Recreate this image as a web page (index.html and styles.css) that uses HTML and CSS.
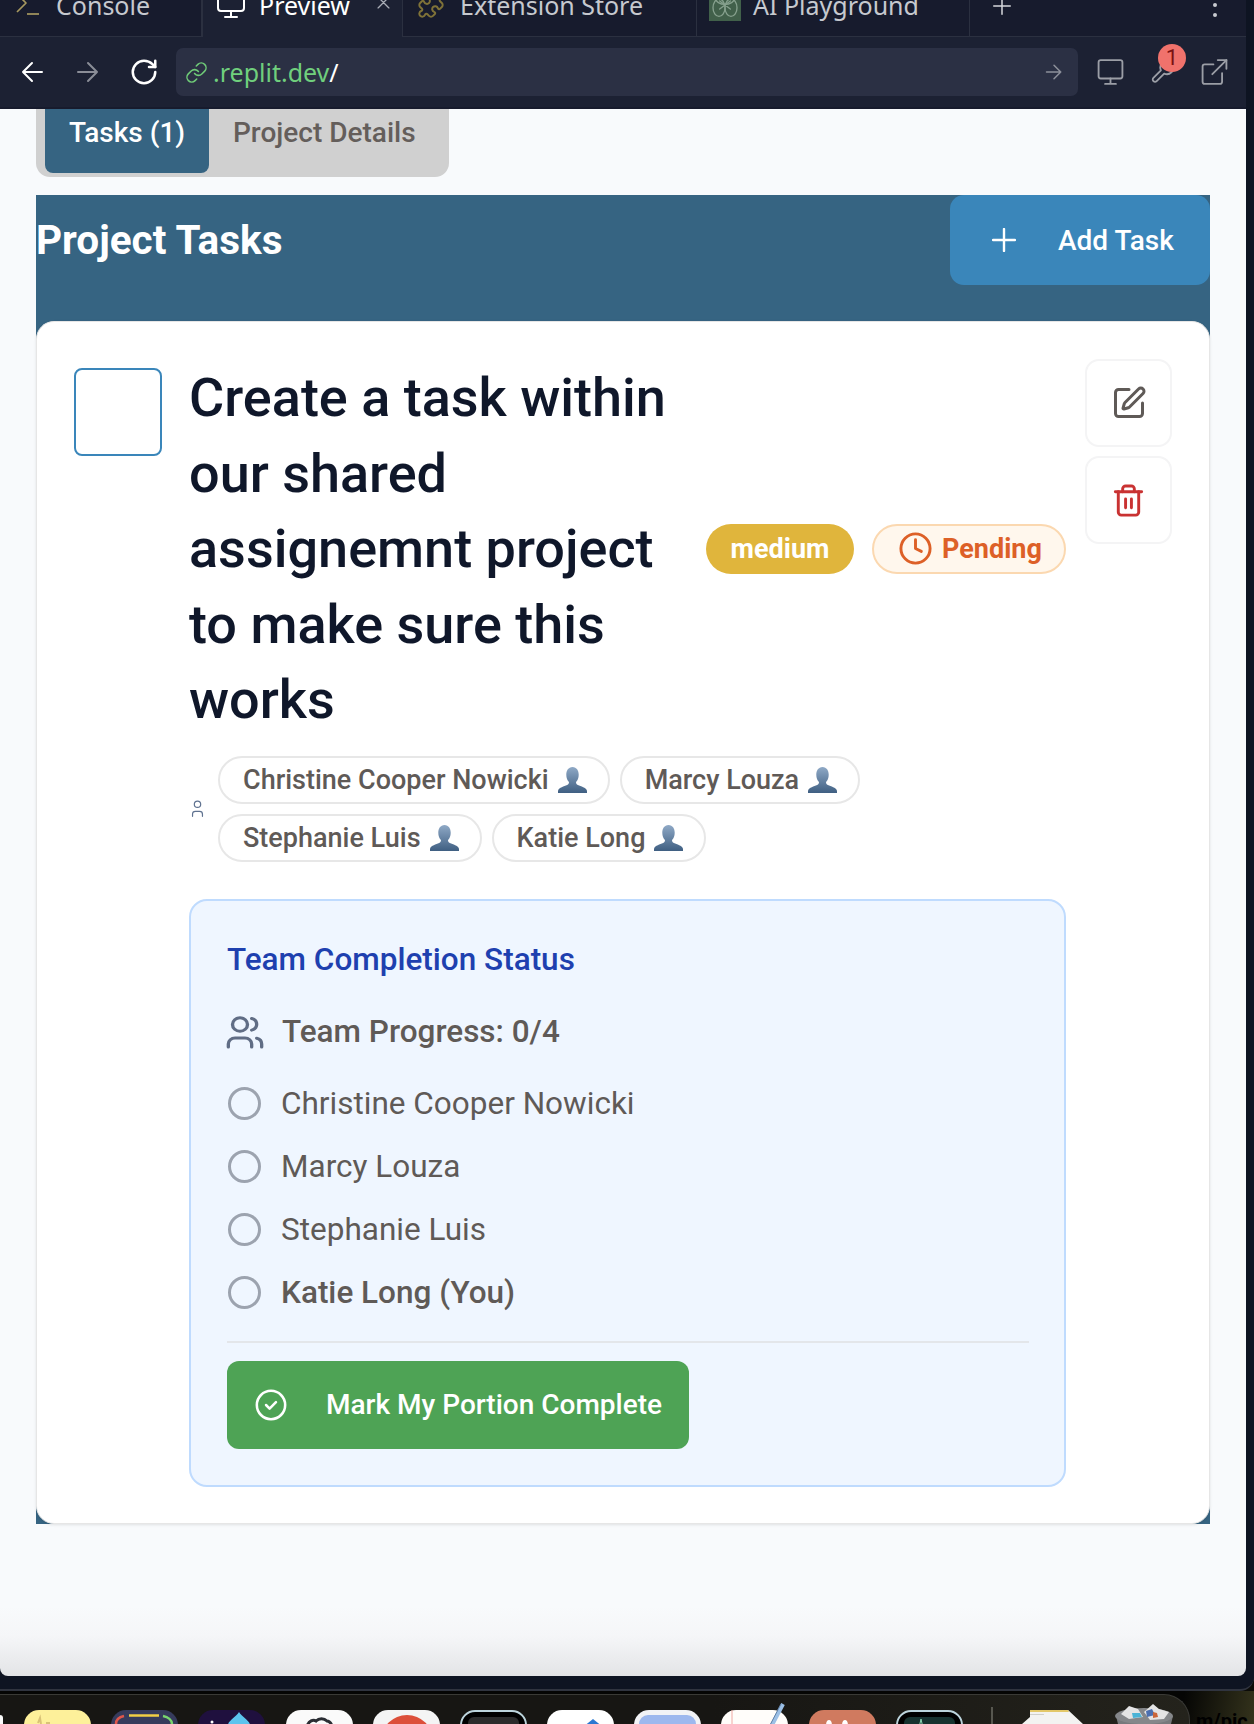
FILE: index.html
```html
<!DOCTYPE html>
<html lang="en">
<head>
  <meta charset="UTF-8" />
  <title>Project Tasks</title>
  <link rel="stylesheet" href="styles.css">
</head>
<body>
  <svg class="defs" width="0" height="0">
    <defs>
      <linearGradient id="bust" x1="0" y1="0" x2="0" y2="1">
        <stop offset="0" stop-color="#8fa9c6" />
        <stop offset="1" stop-color="#3f5f82" />
      </linearGradient>
      <symbol id="bust-icon" viewBox="0 0 28 25">
        <path fill="url(#bust)" d="M14 0c4 0 6 3.600 6 7.500 0 3-1.100 5.500-2.600 7 0 1.300.4 2.200 1.800 2.900 3 1.400 7.800 2.400 8.600 5.100.3 1 .2 1.700.2 2.500H0c0-.8-.1-1.500.2-2.500.8-2.700 5.600-3.700 8.600-5.100 1.400-.7 1.800-1.600 1.800-2.900-1.500-1.500-2.600-4-2.600-7C8 3.600 10 0 14 0z" />
      </symbol>
    </defs>
  </svg>

  <div class="window">
    <div class="tabstrip">
      <div class="tab tab-console">
        <svg class="ic ic-prompt" viewBox="0 0 24 24"><path d="M1 2l9 9-9 9" /><path d="M11 22h12" /></svg>
        <span>Console</span>
      </div>
      <div class="tab tab-active">
        <svg class="ic ic-tab" viewBox="0 0 28 28"><rect x="1" y="1" width="26" height="20" rx="3" /><path d="M14 21v6M8 27h12" /></svg>
        <span>Preview</span>
        <svg class="ic ic-close" viewBox="0 0 12 12"><path d="M1 1l10 10M11 1L1 11" /></svg>
      </div>
      <div class="tab tab-ext">
        <svg class="ic ic-puzzle" viewBox="0 0 24 24"><path d="M19.439 7.850c-.049.322.059.648.289.878l1.568 1.568c.47.47.706 1.087.706 1.704s-.235 1.233-.706 1.704l-1.611 1.611a.98.98 0 0 1-.837.276c-.47-.07-.802-.48-.968-.925a2.501 2.501 0 1 0-3.214 3.214c.446.166.855.497.925.968a.979.979 0 0 1-.276.837l-1.610 1.610a2.404 2.404 0 0 1-1.705.707 2.402 2.402 0 0 1-1.704-.706l-1.568-1.568a1.026 1.026 0 0 0-.877-.29c-.493.074-.84.504-1.020.968a2.500 2.500 0 1 1-3.237-3.237c.464-.18.894-.527.967-1.020a1.026 1.026 0 0 0-.289-.877l-1.568-1.568A2.402 2.402 0 0 1 1.998 12c0-.617.236-1.234.706-1.704L4.230 8.770c.24-.24.581-.353.917-.303.515.077.877.528 1.073 1.010a2.500 2.500 0 1 0 3.259-3.259c-.482-.196-.933-.558-1.010-1.073-.05-.336.062-.676.303-.917l1.525-1.525A2.402 2.402 0 0 1 12 1.998c.617 0 1.234.236 1.704.706l1.568 1.568c.23.23.556.338.877.29.493-.074.84-.504 1.020-.968a2.500 2.500 0 1 1 3.237 3.237c-.464.18-.894.527-.967 1.020Z" /></svg>
        <span>Extension Store</span>
      </div>
      <div class="tab tab-ai">
        <span class="ai-logo">
          <svg class="ic" viewBox="0 0 24 24"><ellipse cx="12" cy="7" rx="7" ry="4.500" /><ellipse cx="7.500" cy="14" rx="4.500" ry="6.500" /><ellipse cx="16.500" cy="14" rx="4.500" ry="6.500" /><path d="M8 9l8 6M16 9l-8 6" /></svg>
        </span>
        <span>AI Playground</span>
      </div>
      <div class="tab-new">
        <svg class="ic ic-plus" viewBox="0 0 24 24"><path d="M12 1v22M1 12h22" /></svg>
      </div>
      <div class="kebab"><i></i><i></i></div>
    </div>

    <div class="urlbar">
      <svg class="ic ic-nav" viewBox="0 0 24 24"><path d="M12 3l-9 9 9 9M3 12h19" /></svg>
      <svg class="ic ic-nav ic-dim" viewBox="0 0 24 24"><path d="M12 3l9 9-9 9M21 12H2" /></svg>
      <svg class="ic ic-nav ic-reload" viewBox="0 0 24 24"><path d="M21 12a9 9 0 1 1-9-9c2.520 0 4.930 1 6.740 2.740L21 8" /><path d="M21 3v5h-5" /></svg>
      <div class="address">
        <svg class="ic ic-link" viewBox="0 0 24 24"><path d="M10 13a5 5 0 0 0 7.540.54l3-3a5 5 0 0 0-7.070-7.070l-1.720 1.710" /><path d="M14 11a5 5 0 0 0-7.540-.54l-3 3a5 5 0 0 0 7.070 7.070l1.710-1.710" /></svg>
        <span class="host">.replit.dev</span><span class="path">/</span>
        <svg class="ic ic-go" viewBox="0 0 24 24"><path d="M12 3l9 9-9 9M21 12H2" /></svg>
      </div>
      <div class="bar-tools">
        <svg class="ic ic-tool" viewBox="0 0 24 24"><rect x="1" y="1" width="22" height="17" rx="2" /><path d="M12 18v5M7 23h10" /></svg>
        <span class="wrench">
          <svg class="ic ic-tool" viewBox="0 0 24 24"><path d="M14.700 6.300a1 1 0 0 0 0 1.400l1.600 1.600a1 1 0 0 0 1.400 0l3.770-3.770a6 6 0 0 1-7.940 7.940l-6.910 6.910a2.120 2.120 0 0 1-3-3l6.910-6.910a6 6 0 0 1 7.940-7.940l-3.760 3.760z" /></svg>
          <span class="wrench-badge">1</span>
        </span>
        <svg class="ic ic-tool" viewBox="0 0 24 24"><path d="M19 13v8a2 2 0 0 1-2 2H3a2 2 0 0 1-2-2V7a2 2 0 0 1 2-2h8" /><path d="M15 1h8v8" /><path d="M10 14 23 1" /></svg>
      </div>
    </div>

    <main class="page">
      <div class="tablist">
        <div class="tablist-item tablist-active">Tasks (1)</div>
        <div class="tablist-item">Project Details</div>
      </div>

      <section class="board">
        <header class="board-head">
          <h2>Project Tasks</h2>
          <button class="add-btn">
            <svg class="ic ic-add" viewBox="0 0 24 24"><path d="M12 1v22M1 12h22" /></svg>
            Add Task
          </button>
        </header>

        <article class="card">
          <div class="checkbox"></div>

          <div class="task">
            <div class="task-top">
              <h3>Create a task within our shared assignemnt project to make sure this works</h3>
              <span class="badge badge-medium">medium</span>
              <span class="badge badge-pending">
                <svg class="ic ic-clock" viewBox="0 0 24 24"><circle cx="12" cy="12" r="10" /><path d="M12 6v6l4 2" /></svg>
                Pending
              </span>
            </div>

            <div class="assignees">
              <svg class="ic ic-user" viewBox="0 0 24 24"><path d="M19 23v-3a4 4 0 0 0-4-4H9a4 4 0 0 0-4 4v3" /><circle cx="12" cy="6" r="4.500" /></svg>
              <div class="chips">
                <span class="chip">Christine Cooper Nowicki <svg class="bust"><use href="#bust-icon" /></svg></span>
                <span class="chip">Marcy Louza <svg class="bust"><use href="#bust-icon" /></svg></span>
                <span class="chip">Stephanie Luis <svg class="bust"><use href="#bust-icon" /></svg></span>
                <span class="chip">Katie Long <svg class="bust"><use href="#bust-icon" /></svg></span>
              </div>
            </div>

            <div class="team">
              <h4>Team Completion Status</h4>
              <div class="progress">
                <svg class="ic ic-users" viewBox="0 0 24 24" preserveAspectRatio="none"><path d="M16 22v-2a4 4 0 0 0-4-4H6a4 4 0 0 0-4 4v2" /><circle cx="9" cy="7" r="4.500" /><path d="M22 22v-2a4 4 0 0 0-3-3.870" /><path d="M16 3a4 4 0 0 1 0 7.750" /></svg>
                Team Progress: 0/4
              </div>
              <ul class="members">
                <li><span class="radio"></span>Christine Cooper Nowicki</li>
                <li><span class="radio"></span>Marcy Louza</li>
                <li><span class="radio"></span>Stephanie Luis</li>
                <li class="me"><span class="radio"></span>Katie Long (You)</li>
              </ul>
              <hr />
              <button class="complete-btn">
                <svg class="ic ic-check" viewBox="0 0 24 24"><circle cx="12" cy="12" r="10" /><path d="m8.500 12 2.500 2.500 4.500-4.500" /></svg>
                Mark My Portion Complete
              </button>
            </div>
          </div>

          <div class="actions">
            <button class="act-btn">
              <svg class="ic ic-edit" viewBox="0 0 24 24"><path d="M12 3H5a2 2 0 0 0-2 2v14a2 2 0 0 0 2 2h14a2 2 0 0 0 2-2v-7" /><path d="M18.375 2.625a1 1 0 0 1 3 3l-9.013 9.014a2 2 0 0 1-.853.505l-2.873.84a.5.5 0 0 1-.62-.62l.84-2.873a2 2 0 0 1 .506-.852z" /></svg>
            </button>
            <button class="act-btn">
              <svg class="ic ic-trash" viewBox="0 0 24 24"><path d="M3 6h18" /><path d="M19 6v14c0 1-1 2-2 2H7c-1 0-2-1-2-2V6" /><path d="M8 6V4c0-1 1-2 2-2h4c1 0 2 1 2 2v2" /><path d="M10 11v6M14 11v6" /></svg>
            </button>
          </div>
        </article>
      </section>
    </main>
  </div>

  <footer class="desktop">
    <div class="dock">
      <div class="app-edge"></div>
      <div class="app app-notes">
        <svg viewBox="0 0 67 20"><path fill="none" stroke="#d9c277" stroke-width="2" d="M14 13l2-5 1 6M22 13h4" /></svg>
      </div>
      <div class="app app-stats">
        <svg viewBox="0 0 67 20">
          <path fill="none" stroke="#f2cf45" stroke-width="2.500" d="M18 5.500h30" />
          <path fill="none" stroke="#e0574b" stroke-width="2.500" d="M5 14c0-4 3-7 8-8" />
          <path fill="none" stroke="#79d66e" stroke-width="2.500" d="M52 6c5 1 9 4 9 8" />
        </svg>
      </div>
      <div class="app app-drop">
        <svg viewBox="0 0 67 20"><path fill="#5cc4ee" d="M41 2c3 5 11 9 11 13H30c0-4 8-8 11-13z" /><circle cx="14" cy="12" r="1.500" fill="#fff" /></svg>
      </div>
      <div class="app app-cloud">
        <svg viewBox="0 0 67 20"><path fill="none" stroke="#2a2d33" stroke-width="3" d="M21 16c2-5 6-7 9-5 3-3 8-3 11 0 3 0 4 2 5 5" /></svg>
      </div>
      <div class="app app-red"><i></i></div>
      <div class="app app-term"><i></i></div>
      <div class="app app-blue">
        <svg viewBox="0 0 67 20"><path fill="#2a78d2" d="M46 9l10 8H36z" /></svg>
      </div>
      <div class="app app-peri"><i></i></div>
      <div class="app app-pad">
        <svg class="pencil" viewBox="0 0 68 24">
          <path fill="none" stroke="#f0a9a4" stroke-width="1" d="M11 7v17" />
          <path fill="none" stroke="#9cc0e6" stroke-width="4" d="M62 1L50 24" />
          <path fill="none" stroke="#5e7fa5" stroke-width="1" d="M60 1L48 24" />
        </svg>
      </div>
      <div class="app app-orange">
        <svg viewBox="0 0 67 20"><path fill="#fff" d="M20 10c2 0 3 2 3 6h-6c0-4 1-6 3-6zM36 10c2 0 3 2 3 6h-6c0-4 1-6 3-6z" /></svg>
      </div>
      <div class="app app-monitor">
        <i><svg viewBox="0 0 50 12"><path fill="none" stroke="#8fd9b6" stroke-width="1" d="M0 11h15l2-9 2 9h31" /></svg></i>
      </div>
      <div class="dock-sep"></div>
      <svg class="app-docs" viewBox="0 0 61 14">
        <path fill="#f3f3f1" d="M8 0h38l15 14H0l8-7z" />
        <path fill="#e3c869" d="M8 0h38l1 2H8z" />
        <path fill="#cfcfca" d="M8 4h14v1H8z" />
      </svg>
      <svg class="app-bin" viewBox="0 0 61 21">
        <path fill="#77797c" d="M2 13h57l-2 8H4z" />
        <ellipse cx="30" cy="13" rx="29" ry="8" fill="#85878a" />
        <path fill="#e4e4e4" d="M7 11l8-8 9 3 5 8-14 2zM30 9l9-8 6 5 10 3-5 7-14 1z" />
        <path fill="#4bb3d6" d="M18 10h8l2 4-9 1z" />
        <path fill="#4b6fb0" d="M32 8l6-2 3 6-8 2z" />
        <path fill="#c9653a" d="M39 9l4 1 1 4-5 1z" />
      </svg>
    </div>
    <div class="wallpaper-text">m/pic</div>
  </footer>
</body>
</html>
```

FILE: styles.css
```css
* { box-sizing: border-box; }
html, body { margin: 0; padding: 0; }
body {
  width: 1254px;
  height: 1724px;
  overflow: hidden;
  display: flex;
  flex-direction: column;
  background: #0b0b08;
  font-family: Roboto, "Liberation Sans", sans-serif;
}
.defs { display: block; height: 0; }
h2, h3, h4, ul { margin: 0; padding: 0; }
button { font-family: inherit; border: 0; cursor: pointer; }

.ic {
  fill: none;
  stroke: currentColor;
  stroke-width: 2;
  stroke-linecap: round;
  stroke-linejoin: round;
  flex-shrink: 0;
}

/* browser chrome */
.window {
  height: 1691px;
  flex-shrink: 0;
  display: flex;
  flex-direction: column;
  padding: 0 8px 13px 0;
  background: #0e1422;
  border-bottom: 2px solid #30343f;
  border-bottom-right-radius: 14px;
  overflow: hidden;
}
.tabstrip {
  height: 37px;
  flex-shrink: 0;
  display: flex;
  background: #171b2d;
  border-bottom: 1px solid #2b3040;
  color: #c6c9cf;
  font-family: "Noto Sans", sans-serif;
  font-size: 25px;
}
.tab {
  height: 36px;
  display: flex;
  align-items: flex-end;
  padding-bottom: 16px;
  border-right: 1px solid #2b3040;
  line-height: 30px;
  white-space: nowrap;
}
.tab-console { width: 202px; padding-left: 16px; gap: 16px; }
.tab-active {
  width: 201px;
  height: 37px;
  padding-left: 14px;
  padding-bottom: 17px;
  gap: 14px;
  background: #1c2133;
  color: #fff;
  border-left: 1px solid #2b3040;
  border-right: 1px solid #2b3040;
}
.tab-ext { width: 294px; padding-left: 14px; gap: 15px; }
.tab-ai { width: 273px; padding-left: 12px; gap: 12px; }
.tab-new { width: 60px; padding: 0 0 0 23px; color: #d6d8dc; }
.ic-prompt { width: 24px; height: 24px; margin-bottom: 4px; color: #a6985f; stroke-width: 1.700; stroke-linecap: butt; }
.ic-tab { width: 28px; height: 28px; margin-bottom: 2px; }
.ic-close { width: 13px; height: 13px; margin: 0 0 11px 13px; color: #a9adb6; stroke-width: 1.200; }
.ic-puzzle { width: 28px; height: 28px; margin-bottom: 1px; color: #7f7238; stroke-width: 1.700; }
.ai-logo {
  width: 32px;
  height: 32px;
  margin-bottom: -1px;
  background: #41604a;
  color: #86a08d;
  display: flex;
}
.ai-logo svg { width: 32px; height: 32px; stroke-width: 1; }
.ic-plus { width: 18px; height: 18px; margin-top: -3px; display: block; }
.kebab {
  margin-left: auto;
  margin-right: 29px;
  padding-top: 3px;
  display: flex;
  flex-direction: column;
  gap: 6px;
}
.kebab i { width: 4px; height: 4px; border-radius: 50%; background: #c8cad0; }

.urlbar {
  height: 72px;
  flex-shrink: 0;
  display: flex;
  align-items: center;
  padding-bottom: 2px;
  background: linear-gradient(#1c2133 70px, #171b2d 70px);
  color: #fff;
}
.ic-nav { width: 24px; height: 24px; margin-left: 20px; }
.ic-dim { margin-left: 32px; color: #8a8d97; }
.ic-reload { width: 30px; height: 30px; margin-left: 29px; }
.address {
  width: 902px;
  height: 48px;
  margin-left: 17px;
  padding: 0 15px 0 9px;
  display: flex;
  align-items: center;
  border-radius: 7px;
  background: #2b3044;
  font-family: "Noto Sans", sans-serif;
  font-size: 25px;
}
.ic-link { width: 23px; height: 23px; margin-right: 5px; color: #6fcb78; stroke-width: 1.600; }
.host { color: #70cf7d; }
.path { color: #fff; }
.ic-go { width: 18px; height: 18px; margin-left: auto; color: #8d909b; }
.bar-tools {
  margin-left: 18px;
  display: flex;
  align-items: center;
  gap: 23px;
  color: #9b9ea6;
}
.ic-tool { width: 29px; height: 26px; stroke-width: 1.700; }
.wrench { position: relative; display: flex; }
.wrench-badge {
  position: absolute;
  top: -15px;
  right: -9px;
  width: 28px;
  height: 28px;
  border-radius: 50%;
  background: #f0726c;
  color: #7c1212;
  font-size: 22px;
  line-height: 28px;
  text-align: center;
}

/* page */
.page {
  flex: 1;
  padding: 0 36px;
  background: linear-gradient(#f8fafc calc(100% - 70px), #f5f6f8 calc(100% - 40px), #e3e4e6 100%);
  border-radius: 0 0 8px 8px;
  overflow: hidden;
}
.tablist {
  width: 413px;
  height: 68px;
  display: flex;
  padding: 0 9px 4px;
  background: #d0d0d0;
  border-radius: 0 0 14px 14px;
  font-size: 28px;
  font-weight: 500;
  color: #645e5b;
  white-space: nowrap;
}
.tablist-item { padding: 6px 25px 0 24px; line-height: 36px; }
.tablist-active {
  width: 164px;
  background: #366482;
  color: #fff;
  border-radius: 0 0 8px 8px;
}

.board {
  width: 1174px;
  height: 1329px;
  margin-top: 18px;
  background: #366482;
}
.board-head {
  height: 126px;
  display: flex;
  justify-content: space-between;
  align-items: flex-start;
}
.board-head h2 {
  color: #fff;
  font-size: 40.500px;
  font-weight: 700;
  line-height: 90px;
}
.add-btn {
  width: 260px;
  height: 90px;
  display: flex;
  align-items: center;
  padding-left: 42px;
  gap: 42px;
  border-radius: 14px;
  background: #3a86ba;
  color: #fff;
  font-size: 28px;
  font-weight: 500;
}
.ic-add { width: 24px; height: 24px; stroke-width: 2.400; }

.card {
  height: 1203px;
  display: flex;
  align-items: flex-start;
  padding: 37px 37px 0 37px;
  background: #fff;
  border: 1px solid #e6e6e6;
  border-radius: 18px;
  box-shadow: 0 1px 3px rgba(0, 0, 0, .1);
}
.checkbox {
  width: 88px;
  height: 88px;
  margin-top: 9px;
  margin-right: 27px;
  border: 2px solid #3a86ba;
  border-radius: 8px;
  flex-shrink: 0;
}
.task { width: 877px; margin-top: 1px; flex-shrink: 0; }
.task-top { display: flex; align-items: center; gap: 18px; }
.task-top h3 {
  flex: 1;
  margin-right: 6px;
  color: #0f172a;
  font-size: 54px;
  font-weight: 500;
  line-height: 75.500px;
}
.badge {
  height: 50px;
  display: flex;
  align-items: center;
  border-radius: 25px;
  font-size: 27px;
  font-weight: 700;
  white-space: nowrap;
}
.badge-medium { width: 148px; justify-content: center; background: #e0b53c; color: #fff; }
.badge-pending {
  width: 194px;
  padding-left: 24px;
  gap: 9px;
  background: #fff7ed;
  border: 2px solid #fbd8b0;
  color: #dd6027;
}
.ic-clock { width: 35px; height: 35px; }

.assignees {
  margin-top: 18px;
  display: flex;
  align-items: center;
  color: #5f7290;
}
.ic-user { width: 17px; height: 17px; margin-right: 12px; stroke-width: 1.700; }
.chips { width: 660px; display: flex; flex-wrap: wrap; gap: 10px; }
.chip {
  height: 48px;
  display: flex;
  align-items: center;
  gap: 9px;
  padding: 0 21px 0 23px;
  border: 2px solid #e7e7e7;
  border-radius: 24px;
  color: #5f5a57;
  font-size: 27px;
  font-weight: 500;
  white-space: nowrap;
}
.bust { width: 29px; height: 26px; }

.team {
  height: 588px;
  margin-top: 37px;
  padding: 37px 35px 0 36px;
  background: #eff6ff;
  border: 2px solid #bfdbfe;
  border-radius: 18px;
}
.team h4 {
  color: #1e40af;
  font-size: 31.500px;
  font-weight: 500;
  line-height: 44px;
}
.progress {
  height: 40px;
  margin-top: 30px;
  display: flex;
  align-items: center;
  gap: 17px;
  color: #5f5a57;
  font-size: 31.500px;
  font-weight: 500;
}
.ic-users { width: 40px; height: 36px; margin: 0 0 0 -2px; color: #606d85; }
.members { margin-top: 34px; list-style: none; display: flex; flex-direction: column; gap: 27px; }
.members li {
  height: 36px;
  display: flex;
  align-items: center;
  gap: 21px;
  color: #5f5a57;
  font-size: 31.500px;
}
.members .me { font-weight: 500; }
.radio {
  width: 33px;
  height: 33px;
  margin-left: 1px;
  border: 3px solid #9ca3af;
  border-radius: 50%;
  margin-right: -1px;
}
.team hr {
  margin: 30px 0 18px;
  height: 2px;
  border: 0;
  background: #e3e6ea;
}
.complete-btn {
  width: 462px;
  height: 88px;
  display: flex;
  align-items: center;
  padding-left: 27px;
  gap: 38px;
  border-radius: 12px;
  background: #4ea355;
  color: #fff;
  font-size: 28px;
  font-weight: 500;
}
.ic-check { width: 34px; height: 34px; stroke-width: 1.800; }

.actions { margin-left: 19px; display: flex; flex-direction: column; gap: 9px; }
.act-btn {
  width: 87px;
  height: 88px;
  display: flex;
  align-items: center;
  justify-content: center;
  background: #fff;
  border: 2px solid #f4f4f5;
  border-radius: 14px;
}
.ic-edit { width: 36px; height: 36px; color: #5f5a57; }
.ic-trash { width: 35px; height: 35px; color: #c93232; }

/* desktop dock */
.desktop {
  flex: 1;
  display: flex;
  overflow: hidden;
  background: linear-gradient(100deg, #050504 94%, #34331c);
}
.dock {
  width: 1190px;
  margin-top: 3px;
  display: flex;
  gap: 20.200px;
  padding: 15px 0 0 0;
  background: linear-gradient(90deg, #171613 60%, #24231c);
  border-top: 1.500px solid #3a3a36;
  border-right: 1.500px solid #3a3a36;
  border-top-right-radius: 26px;
}
.app-edge {
  width: 3px;
  height: 40px;
  margin: 5px .8px 0 0;
  background: #fafafa;
  border-radius: 0 10px 0 0;
  flex-shrink: 0;
}
.app {
  width: 67px;
  height: 60px;
  flex-shrink: 0;
  border-radius: 15px 15px 0 0;
  overflow: hidden;
}
.app svg { display: block; width: 67px; height: 20px; }
.app-notes { background: #fdf09a; }
.app-stats { background: #363b5c; }
.app-drop { background: #1f103e; }
.app-cloud { background: #fafafa; }
.app-red { background: #f4f4f4; }
.app-red i { display: block; width: 52px; height: 52px; margin: 5px 0 0 8px; border-radius: 50%; background: #dc4f3a; }
.app-term { background: #000; border: 2px solid #bcd4dc; }
.app-term i { display: block; height: 40px; margin: 5px 6px 0; background: #2b2b2b; border-radius: 6px 6px 0 0; }
.app-blue { background: #fff; }
.app-peri { background: #f2f3f6; padding: 5px 5px 0; }
.app-peri i { display: block; height: 50px; background: #9db8ee; border-radius: 9px 9px 0 0; }
.app-pad { position: relative; overflow: visible; background: #fffdfa; }
.app-pad .pencil { position: absolute; top: -7px; left: 0; width: 68px; height: 24px; }
.app-orange { background: #d07a5f; }
.app-monitor { background: #000; border: 2px solid #bcd4dc; }
.app-monitor i { display: block; height: 40px; margin: 5px 6px 0; background: #17322f; border-radius: 6px 6px 0 0; }
.app-monitor svg { width: 50px; height: 12px; }
.dock-sep { width: 1.500px; height: 40px; margin: -3px 9px 0 8px; background: #57574f; flex-shrink: 0; }
.app-docs { width: 61px; height: 14px; flex-shrink: 0; margin-top: 0; }
.app-bin { width: 61px; height: 21px; flex-shrink: 0; margin: -7px 0 0 11px; }
.wallpaper-text {
  margin: 20px 0 0 6px;
  color: #000;
  font-size: 20px;
  font-weight: 700;
  line-height: 20px;
  white-space: nowrap;
}
```
